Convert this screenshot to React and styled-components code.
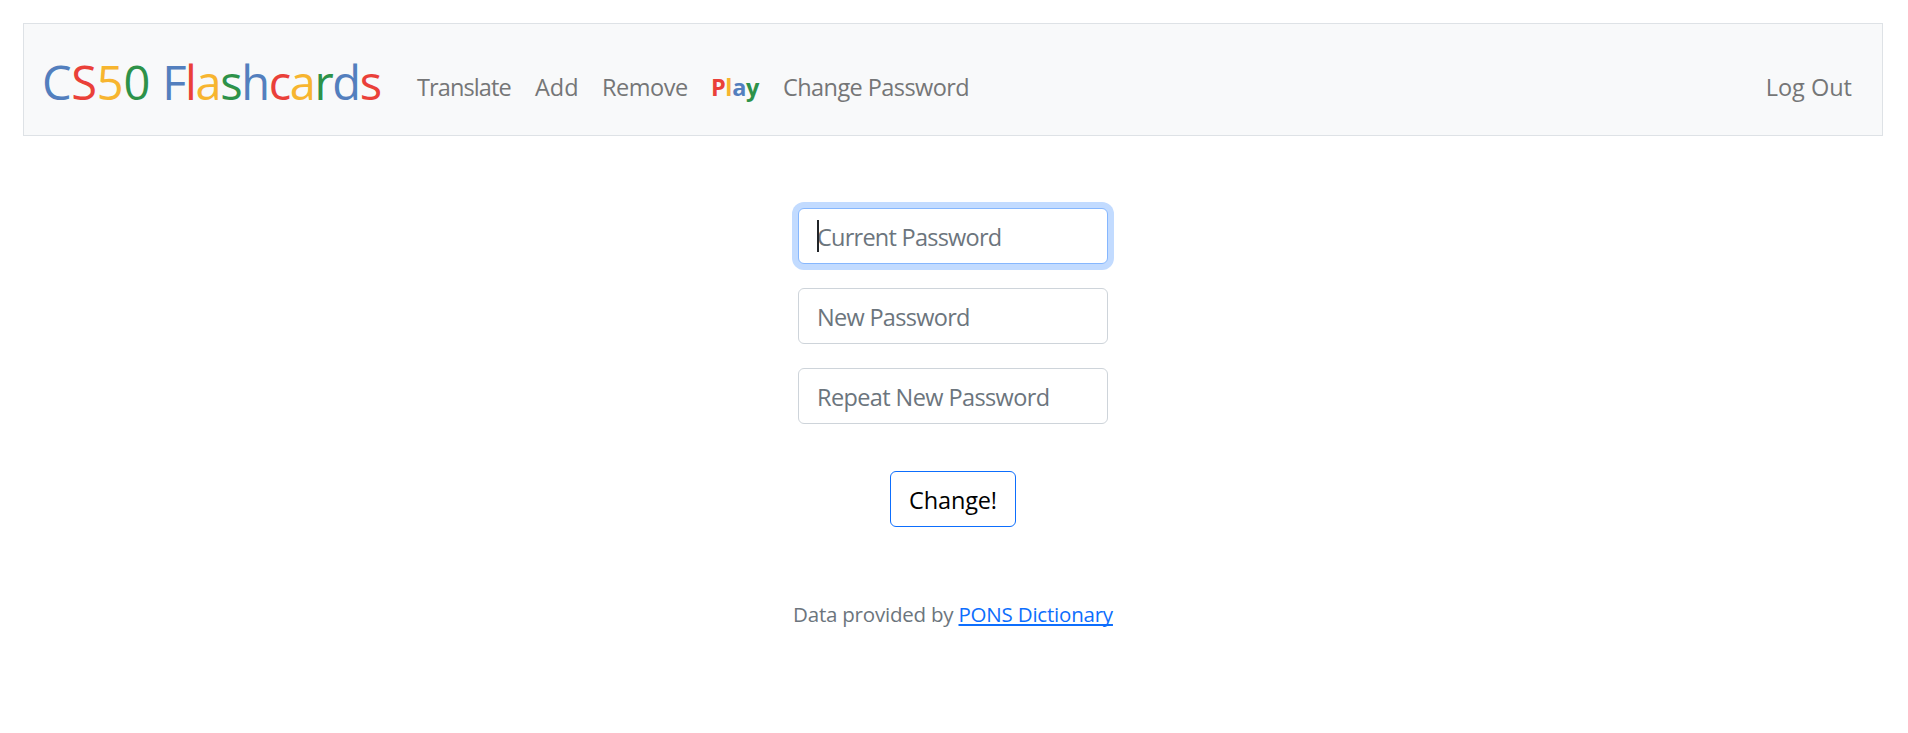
import React from "react";
import styled, { createGlobalStyle } from "styled-components";

const palette = { b: "#537fbe", r: "#ea4039", y: "#f7b52f", g: "#2d9249" };

const GlobalStyle = createGlobalStyle`
  *, *::before, *::after { box-sizing: border-box; }
  body {
    margin: 0;
    background: #fff;
    color: #212529;
    font-family: "Segoe UI", "Open Sans", "Noto Sans", sans-serif;
    font-size: 23.5px;
    line-height: 36px;
  }
`;

const Page = styled.div`
  display: flex;
  flex-direction: column;
  padding: 23px 25px 0 23px;
`;

const Navbar = styled.nav`
  display: flex;
  align-items: center;
  height: 113px;
  padding: 0 30px 0 18px;
  border: 1px solid #dee2e6;
  background: #f8f9fa;
  white-space: nowrap;
`;

const Brand = styled.a`
  width: 375px;
  padding-top: 5px;
  font-size: 47px;
  line-height: 72px;
`;

const Word = styled.span`
  letter-spacing: ${(p) => p.$track}px;
`;

const Letter = styled.span`
  color: ${(p) => palette[p.$tone]};
`;

const NavLink = styled.a`
  width: ${(p) => p.$width}px;
  padding-top: 15px;
  color: #757677;
  font-weight: ${(p) => (p.$bold ? 700 : 400)};
  letter-spacing: ${(p) => p.$track || 0}px;
`;

const Spacer = styled.div`
  flex: 1;
`;

const Form = styled.form`
  display: flex;
  flex-direction: column;
  align-items: center;
  gap: 24px;
  margin-top: 72px;
`;

const Field = styled.div`
  position: relative;
  width: 310px;
  height: 56px;
`;

const Input = styled.input`
  display: block;
  width: 100%;
  height: 100%;
  padding: 2px 18px 0;
  border: 1px solid ${(p) => (p.$active ? "#86b7fe" : "#ced4da")};
  border-radius: 6px;
  outline: 0;
  box-shadow: ${(p) => (p.$active ? "0 0 0 6px #c2dbff" : "none")};
  background: #fff;
  color: #212529;
  font: inherit;
  letter-spacing: ${(p) => p.$track || 0}px;

  &::placeholder {
    color: #6c757d;
    opacity: 1;
  }
`;

const Caret = styled.span`
  position: absolute;
  top: 12px;
  left: 19px;
  width: 2px;
  height: 32px;
  background: #212529;
`;

const Button = styled.button`
  width: 126px;
  height: 56px;
  margin-top: 23px;
  padding: 1px 0 0;
  border: 1px solid #0d6efd;
  border-radius: 6px;
  background: #fff;
  color: #000;
  font: inherit;
  letter-spacing: ${(p) => p.$track || 0}px;
`;

const Footer = styled.footer`
  margin-top: 71px;
  color: #6c757d;
  font-size: 20.5px;
  line-height: 32px;
  text-align: center;
  letter-spacing: ${(p) => p.$track || 0}px;
`;

const FooterLink = styled.a`
  color: #0d6efd;
  text-decoration: underline;
  text-decoration-thickness: 2px;
  text-underline-offset: 2px;
  text-decoration-skip-ink: none;
`;

const Colored = ({ text, tones }) =>
  [...text].map((c, i) => (
    <Letter key={i} $tone={tones[i]}>{c}</Letter>
  ));

export default function App() {
  return (
    <>
      <GlobalStyle />
      <Page>
        <Navbar>
          <Brand>
            <Word $track={-0.3}>
              <Colored text="CS50" tones="bryg" />
            </Word>{" "}
            <Word $track={-1.4}>
              <Colored text="Flashcards" tones="brygbrygbr" />
            </Word>
          </Brand>
          <NavLink $width={118} $track={-0.88}>Translate</NavLink>
          <NavLink $width={67}>Add</NavLink>
          <NavLink $width={109} $track={-0.45}>Remove</NavLink>
          <NavLink $width={72} $track={-0.4} $bold>
            <Colored text="Play" tones="rybg" />
          </NavLink>
          <NavLink $track={-0.57}>Change Password</NavLink>
          <Spacer />
          <NavLink>Log Out</NavLink>
        </Navbar>
        <Form>
          <Field>
            <Input type="password" placeholder="Current Password" $track={-0.75} $active />
            <Caret />
          </Field>
          <Field>
            <Input type="password" placeholder="New Password" $track={-0.7} />
          </Field>
          <Field>
            <Input type="password" placeholder="Repeat New Password" $track={-0.6} />
          </Field>
          <Button type="button" $track={-0.15}>Change!</Button>
        </Form>
        <Footer $track={-0.21}>
          Data provided by <FooterLink>PONS Dictionary</FooterLink>
        </Footer>
      </Page>
    </>
  );
}
